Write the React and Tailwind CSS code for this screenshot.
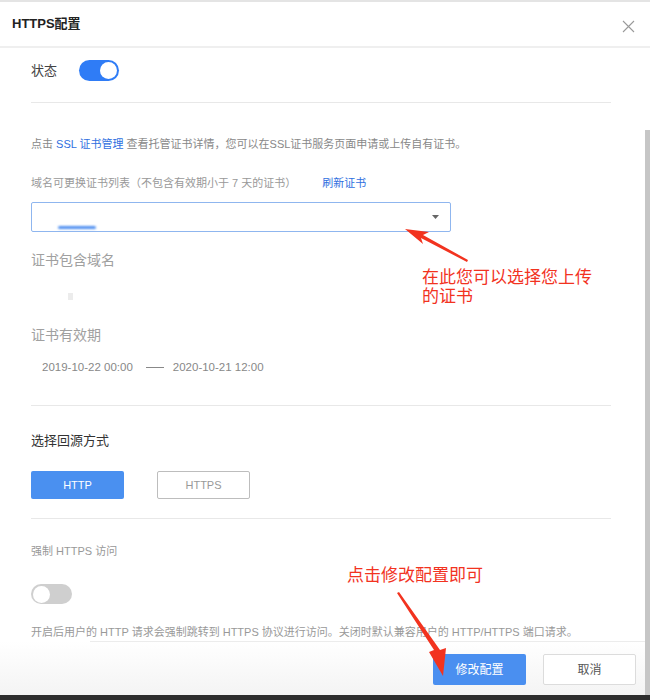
import React from "react";

const font = { fontFamily: '"Liberation Sans", "Noto Sans CJK SC", sans-serif' };

const Divider = ({ className = "" }) => <div className={`h-px bg-[#e8e8e8] ${className}`}></div>;

const Toggle = ({ on }) => (
    <div className={`rounded-full flex items-center px-[2px] ${on ? 'w-[40px] h-[21px] bg-[#2f7cf6] justify-end' : 'w-[41px] h-[20px] bg-[#cfcfcf] justify-start'}`}>
        <div className="rounded-full bg-white w-[17px] h-[17px]"></div>
    </div>
);

export default function App() {
    return (
        <div style={font} className="relative w-[650px] h-[700px] overflow-hidden bg-white flex flex-col">
            {/* header */}
            <div className="border-t-2 border-[#e4e4e4] border-b-2 border-b-[#efefef] h-[48px] flex items-center justify-between pl-3 pr-[15px]">
                <span className="text-[13px] font-bold text-[#222]">HTTPS配置</span>
                <svg width="13" height="13" viewBox="0 0 13 13" className="mt-[4px]">
                    <path d="M1 1 L12 12 M12 1 L1 12" stroke="#9a9a9a" strokeWidth="1.1" fill="none" />
                </svg>
            </div>

            {/* body */}
            <div className="flex flex-col pl-[31px] pr-[39px]">
                <div className="mt-[12px] h-[21px] flex items-center">
                    <span className="text-[13px] text-[#444] w-[48px]">状态</span>
                    <Toggle on />
                </div>
                <Divider className="mt-[21px]" />

                <p className="mt-[33px] text-[11px] leading-[16px] text-[#888] whitespace-nowrap">
                    点击 <span className="text-[#2f6fe0]">SSL 证书管理</span> 查看托管证书详情，您可以在SSL证书服务页面申请或上传自有证书。
                </p>
                <p className="mt-[23px] text-[11px] leading-[16px] text-[#999] whitespace-nowrap">
                    域名可更换证书列表（不包含有效期小于 7 天的证书）<span className="ml-[26px] text-[#2f6fe0]">刷新证书</span>
                </p>

                <div className="mt-[11px] w-[420px] h-[30px] rounded-[2px] border border-[#8fb6ef] flex items-center justify-between px-[10px] relative">
                    <div className="absolute left-[26px] bottom-[2px] w-[38px] h-[3px] rounded-full bg-[#4f8ff0] blur-[1px]"></div>
                    <span></span>
                    <svg width="7" height="4" viewBox="0 0 7 4" className="mr-[1px]">
                        <path d="M0 0 L7 0 L3.5 4 Z" fill="#666" />
                    </svg>
                </div>

                <span className="mt-[18px] text-[14px] leading-[20px] text-[#a0a0a0]">证书包含域名</span>
                <div className="mt-[23px] ml-[37px] w-[5px] h-[7px] bg-[#ececec]"></div>

                <span className="mt-[25px] text-[14px] leading-[20px] text-[#a0a0a0]">证书有效期</span>
                <div className="mt-[14px] ml-[11px] flex items-center text-[11.5px] leading-[16px] text-[#888] whitespace-nowrap">
                    <span>2019-10-22 00:00</span>
                    <span className="ml-[13px] mr-[9px] w-[18px] h-px bg-[#888]"></span>
                    <span>2020-10-21 12:00</span>
                </div>
                <Divider className="mt-[30px]" />

                <span className="mt-[26px] text-[13px] leading-[18px] text-[#333]">选择回源方式</span>
                <div className="mt-[21px] flex gap-[33px]">
                    <button className="w-[93px] h-[28px] rounded-[2px] bg-[#4a90f0] text-white text-[11px]">HTTP</button>
                    <button className="w-[93px] h-[28px] rounded-[2px] border border-[#bdbdbd] bg-white text-[#999] text-[11px]">HTTPS</button>
                </div>
                <Divider className="mt-[19px]" />

                <span className="mt-[24px] text-[11px] leading-[16px] text-[#999]">强制 HTTPS 访问</span>
                <div className="mt-[25px]"><Toggle /></div>
                <p className="mt-[20px] text-[11px] leading-[16px] text-[#999] whitespace-nowrap">
                    开启后用户的 HTTP 请求会强制跳转到 HTTPS 协议进行访问。关闭时默认兼容用户的 HTTP/HTTPS 端口请求。
                </p>
            </div>

            {/* footer */}
            <div className="mt-px flex-1 flex flex-col bg-gradient-to-b from-white to-[#f4f4f4]">
                <div className="ml-[90px] h-px bg-[#ececec]"></div>
                <div className="flex-1 flex items-start justify-end gap-[17px] pr-[14px] pt-[12px]">
                    <button className="w-[93px] h-[31px] rounded-[2px] bg-[#4a8ff0] text-white text-[12px]">修改配置</button>
                    <button className="w-[93px] h-[31px] rounded-[2px] border border-[#dcdcdc] bg-white text-[#555] text-[12px]">取消</button>
                </div>
            </div>
            <div className="h-[5px] bg-[#2e2e2e]"></div>

            {/* scrollbar */}
            <div className="absolute right-0 top-[130px] bottom-[5px] w-[5px] bg-[#c6c6c6]"></div>

            {/* annotations */}
            <div className="absolute left-[422px] top-[268px] text-[17px] leading-[19px] text-[#f2331f]">
                <div>在此您可以选择您上传</div>
                <div>的证书</div>
            </div>
            <div className="absolute left-[347px] top-[566px] text-[17px] leading-[20px] text-[#f2331f]">点击修改配置即可</div>
            <svg className="absolute left-0 top-0 pointer-events-none" width="650" height="700" viewBox="0 0 650 700">
                <path d="M467 262 L421 238 L423 244 L405 229 L429 232 L423 235 L468 260 Z" fill="#f2331f" />
                <path d="M397 593 L434 650 L429 652 L443 676 L446 648 L440 650 L399 592 Z" fill="#f2331f" />
            </svg>
        </div>
    );
}
